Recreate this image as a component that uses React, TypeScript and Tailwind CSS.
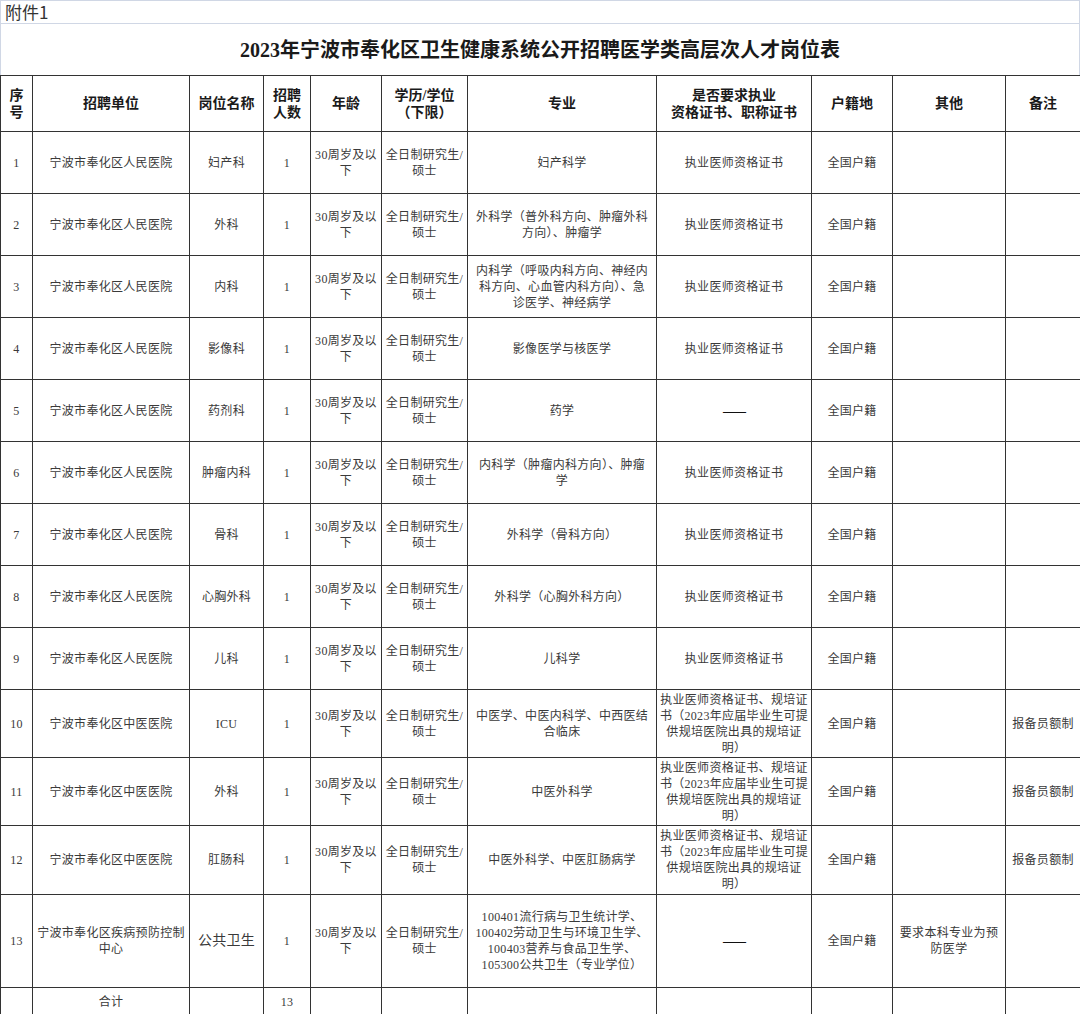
import React from "react";

type Content = string | string[];

const LINE = "border-[#333333]";

function Lines({ c }: { c: Content }) {
  const arr = Array.isArray(c) ? c : [c];
  return (
    <>
      {arr.map((l, i) => (
        <span key={i} className={`block whitespace-nowrap ${l === "——" ? "text-[#111] font-bold tracking-[-1px]" : ""}`}>
          {l}
        </span>
      ))}
    </>
  );
}

function HeadCell({ c }: { c: Content }) {
  return (
    <div
      className={`flex items-center justify-center text-center border-r border-b ${LINE} font-bold text-[14px] leading-[17px] text-[#1a1a1a] font-['Liberation_Serif','Noto_Sans_CJK_SC',serif]`}
    >
      <div>
        <Lines c={c} />
      </div>
    </div>
  );
}

function Cell({ c, big }: { c: Content; big?: boolean }) {
  return (
    <div
      className={`flex items-center justify-center text-center border-r border-b ${LINE} ${
        big ? "text-[14px]" : "text-[12px]"
      } leading-[16px] tracking-[0.3px] text-[#3a3a3a] font-['Liberation_Serif','Noto_Sans_CJK_SC',serif]`}
    >
      <div>
        <Lines c={c} />
      </div>
    </div>
  );
}

const AGE = ["30周岁及以", "下"];
const EDU = ["全日制研究生/", "硕士"];
const RM = "宁波市奉化区人民医院";
const ZY = "宁波市奉化区中医医院";
const CERT = "执业医师资格证书";
const GP = ["执业医师资格证书、规培证", "书（2023年应届毕业生可提", "供规培医院出具的规培证", "明）"];
const HJ = "全国户籍";

type Row = { cells: Content[]; big?: number[] };

const rows: Row[] = [
  { cells: ["1", RM, "妇产科", "1", AGE, EDU, "妇产科学", CERT, HJ, "", ""] },
  { cells: ["2", RM, "外科", "1", AGE, EDU, ["外科学（普外科方向、肿瘤外科", "方向）、肿瘤学"], CERT, HJ, "", ""] },
  {
    cells: [
      "3",
      RM,
      "内科",
      "1",
      AGE,
      EDU,
      ["内科学（呼吸内科方向、神经内", "科方向、心血管内科方向）、急", "诊医学、神经病学"],
      CERT,
      HJ,
      "",
      "",
    ],
  },
  { cells: ["4", RM, "影像科", "1", AGE, EDU, "影像医学与核医学", CERT, HJ, "", ""] },
  { cells: ["5", RM, "药剂科", "1", AGE, EDU, "药学", "——", HJ, "", ""] },
  { cells: ["6", RM, "肿瘤内科", "1", AGE, EDU, ["内科学（肿瘤内科方向）、肿瘤", "学"], CERT, HJ, "", ""] },
  { cells: ["7", RM, "骨科", "1", AGE, EDU, "外科学（骨科方向）", CERT, HJ, "", ""] },
  { cells: ["8", RM, "心胸外科", "1", AGE, EDU, "外科学（心胸外科方向）", CERT, HJ, "", ""] },
  { cells: ["9", RM, "儿科", "1", AGE, EDU, "儿科学", CERT, HJ, "", ""] },
  { cells: ["10", ZY, "ICU", "1", AGE, EDU, ["中医学、中医内科学、中西医结", "合临床"], GP, HJ, "", "报备员额制"] },
  { cells: ["11", ZY, "外科", "1", AGE, EDU, "中医外科学", GP, HJ, "", "报备员额制"] },
  { cells: ["12", ZY, "肛肠科", "1", AGE, EDU, "中医外科学、中医肛肠病学", GP, HJ, "", "报备员额制"] },
  {
    cells: [
      "13",
      ["宁波市奉化区疾病预防控制", "中心"],
      "公共卫生",
      "1",
      AGE,
      EDU,
      ["100401流行病与卫生统计学、", "100402劳动卫生与环境卫生学、", "100403营养与食品卫生学、", "105300公共卫生（专业学位）"],
      "——",
      HJ,
      ["要求本科专业为预", "防医学"],
      "",
    ],
    big: [2],
  },
  { cells: ["", "合计", "", "13", "", "", "", "", "", "", ""] },
];

const headers: Content[] = [
  ["序", "号"],
  "招聘单位",
  "岗位名称",
  ["招聘", "人数"],
  "年龄",
  ["学历/学位", "（下限）"],
  "专业",
  ["是否要求执业", "资格证书、职称证书"],
  "户籍地",
  "其他",
  "备注",
];

export default function App() {
  return (
    <div className="w-[1080px] h-[1014px] overflow-hidden bg-white">
      <div className="flex h-[24px] items-center border-t border-l border-r border-b border-[#d0d7e5] pl-[4px] text-[17px] text-[#333] font-['Noto_Sans_CJK_SC',sans-serif]">
        附件1
      </div>
      <div className="flex h-[51px] items-center justify-center border-l border-r border-[#d0d7e5] pt-[1px] text-[20px] font-bold text-[#1a1a1a] font-['Liberation_Serif','Noto_Sans_CJK_SC',serif]">
        2023年宁波市奉化区卫生健康系统公开招聘医学类高层次人才岗位表
      </div>
      <div
        className={`grid grid-cols-[32px_157px_74px_47px_71px_86px_189px_155px_81px_113px_75px] grid-rows-[56px_62px_62px_62px_62px_62px_62px_62px_62px_62px_68px_68px_69px_93px_28px] border-t border-l ${LINE}`}
      >
        {headers.map((h, i) => (
          <HeadCell key={"h" + i} c={h} />
        ))}
        {rows.map((r, ri) =>
          r.cells.map((c, ci) => <Cell key={ri + "-" + ci} c={c} big={r.big?.includes(ci)} />)
        )}
      </div>
    </div>
  );
}
